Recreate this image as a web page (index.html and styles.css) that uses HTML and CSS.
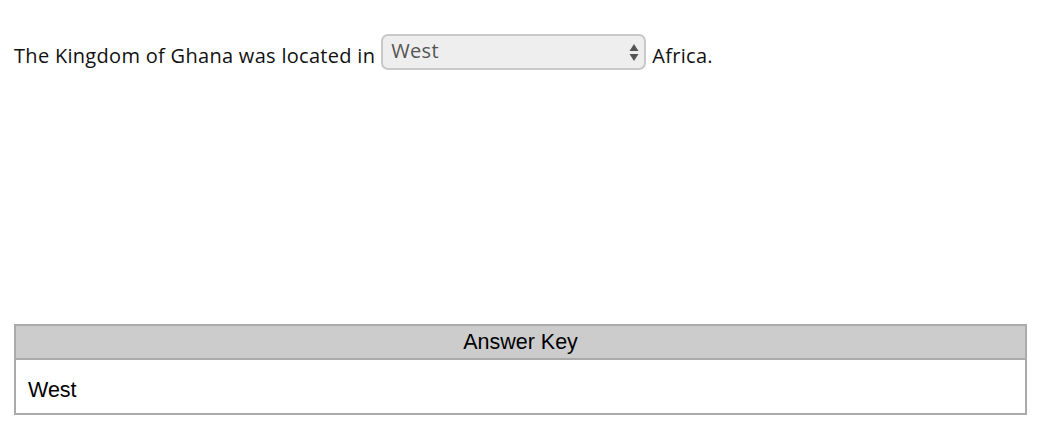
FILE: index.html
```html
<!DOCTYPE html>
<html>
<head>
<meta charset="utf-8">
<link rel="stylesheet" href="styles.css">
</head>
<body>
<div class="page">
  <p class="question">
    <span class="txt">The Kingdom of Ghana was located in</span>
    <span class="select-wrap">
      <select class="select"><option>West</option><option>East</option><option>North</option><option>South</option></select>
      <svg class="arrows" width="10" height="22" viewBox="0 0 10 22"><path d="M5 3 L9.5 10 L0.5 10 Z" fill="#555"/><path d="M5 20 L9.5 13 L0.5 13 Z" fill="#555"/></svg>
    </span>
    <span class="txt">Africa.</span>
  </p>
  <table class="key">
    <thead><tr><th>Answer Key</th></tr></thead>
    <tbody><tr><td>West</td></tr></tbody>
  </table>
</div>
</body>
</html>
```
FILE: styles.css
```css
html, body { margin: 0; padding: 0; background: #fff; }
.page { padding: 34px 17px 0 14px; }
.question {
  margin: 0;
  display: flex;
  align-items: center;
  gap: 6px;
  font-family: "Open Sans", Lato, sans-serif;
  font-size: 20px;
  letter-spacing: 0.3px;
  color: #111;
  height: 36px;
}
.txt { padding-top: 6px; }
.select-wrap { position: relative; display: inline-flex; }
.select {
  appearance: none;
  -webkit-appearance: none;
  width: 265px;
  height: 36px;
  box-sizing: border-box;
  border: 2px solid #c8c8c8;
  border-radius: 7px;
  background: #eeeeee;
  color: #555;
  font-family: "Open Sans", Lato, sans-serif;
  font-size: 20px;
  letter-spacing: 0.3px;
  padding: 0 0 4px 8px;
  margin: 0;
  outline: none;
}
.arrows { position: absolute; right: 7px; top: 7px; pointer-events: none; }
.key {
  margin-top: 254px;
  width: 100%;
  border-collapse: collapse;
  font-family: "Liberation Sans", Arial, sans-serif;
  font-size: 21.5px;
  color: #000;
}
.key th {
  background: #cccccc;
  border: 2px solid #aaaaaa;
  font-weight: normal;
  height: 32px;
  padding: 0;
  text-align: center;
}
.key td {
  border: 2px solid #aaaaaa;
  height: 55px;
  padding: 8px 12px 0;
  box-sizing: border-box;
  text-align: left;
}
```
